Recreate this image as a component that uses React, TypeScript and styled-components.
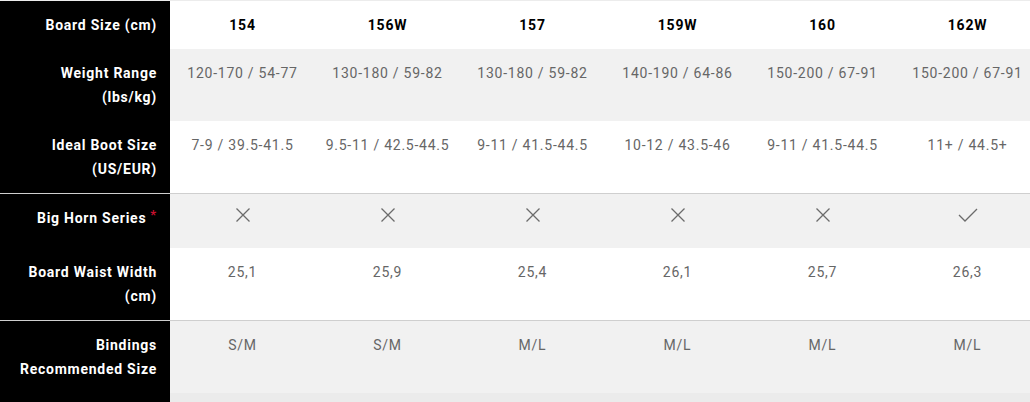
import styled, { createGlobalStyle } from 'styled-components';

const GlobalStyle = createGlobalStyle`
  html, body {
    margin: 0;
    padding: 0;
    background: #ebebeb;
    overflow: hidden;
  }
  body {
    font-family: 'Roboto', 'Liberation Sans', sans-serif;
  }
`;

const Table = styled.div`
  width: 1040px;
  border-top: 1px solid #ececec;
`;

const Row = styled.div<{ $shade?: boolean; $divider?: boolean; $short?: boolean }>`
  display: grid;
  grid-template-columns: 170px repeat(6, 145px);
  background: ${({ $shade }) => ($shade ? '#f1f1f1' : '#ffffff')};
  border-top: ${({ $divider }) => ($divider ? '1px solid #cfcfcf' : 'none')};
  min-height: ${({ $short }) => ($short ? '54px' : '72px')};
`;

const HeadRow = styled(Row)`
  min-height: 48px;
`;

const Label = styled.div`
  background: #000;
  color: #fff;
  font-weight: 700;
  font-size: 14px;
  line-height: 24px;
  letter-spacing: 0.75px;
  text-align: right;
  padding: 12px 13px 12px 4px;
  white-space: nowrap;
`;

const Cell = styled.div<{ $head?: boolean }>`
  color: ${({ $head }) => ($head ? '#000' : '#666')};
  font-weight: ${({ $head }) => ($head ? 700 : 400)};
  font-size: 14px;
  line-height: 24px;
  letter-spacing: 0.75px;
  text-align: center;
  padding: 12px 0;
  white-space: nowrap;
`;

const IconCell = styled.div`
  display: flex;
  justify-content: center;
  padding-top: 13px;
`;

const Star = styled.sup`
  color: #c8102e;
  font-size: 13px;
  margin-left: 4px;
  vertical-align: 4px;
  line-height: 0;
`;

const Filler = styled.div`
  display: grid;
  grid-template-columns: 170px 1fr;
  height: 10px;
`;

const FillerLabel = styled.div`
  background: #000;
`;

const Cross = () => (
  <svg width="16" height="16" viewBox="0 0 16 16" fill="none" stroke="#6b6b6b" strokeWidth="1.3">
    <path d="M1.5 1.5 L14.5 14.5 M14.5 1.5 L1.5 14.5" />
  </svg>
);

const Check = () => (
  <svg width="20" height="16" viewBox="0 0 20 16" fill="none" stroke="#6b6b6b" strokeWidth="1.3">
    <path d="M1 8 L7 14 L19 2" />
  </svg>
);

const sizes = ['154', '156W', '157', '159W', '160', '162W'];

type Spec = { label: React.ReactNode; values: string[]; shade?: boolean; divider?: boolean };

const specs: Spec[] = [
  {
    label: <>Weight Range<br />(lbs/kg)</>,
    values: ['120-170 / 54-77', '130-180 / 59-82', '130-180 / 59-82', '140-190 / 64-86', '150-200 / 67-91', '150-200 / 67-91'],
    shade: true,
  },
  {
    label: <>Ideal Boot Size<br />(US/EUR)</>,
    values: ['7-9 / 39.5-41.5', '9.5-11 / 42.5-44.5', '9-11 / 41.5-44.5', '10-12 / 43.5-46', '9-11 / 41.5-44.5', '11+ / 44.5+'],
  },
];

const bigHorn = [false, false, false, false, false, true];

const lower: Spec[] = [
  {
    label: <>Board Waist Width<br />(cm)</>,
    values: ['25,1', '25,9', '25,4', '26,1', '25,7', '26,3'],
  },
  {
    label: <>Bindings<br />Recommended Size</>,
    values: ['S/M', 'S/M', 'M/L', 'M/L', 'M/L', 'M/L'],
    shade: true,
    divider: true,
  },
];

const SpecRow = ({ label, values, shade, divider }: Spec) => (
  <Row $shade={shade} $divider={divider}>
    <Label>{label}</Label>
    {values.map((v, i) => (
      <Cell key={i}>{v}</Cell>
    ))}
  </Row>
);

export default function App() {
  return (
    <>
      <GlobalStyle />
      <Table>
        <HeadRow>
          <Label>Board Size (cm)</Label>
          {sizes.map((s) => (
            <Cell key={s} $head>
              {s}
            </Cell>
          ))}
        </HeadRow>
        {specs.map((s, i) => (
          <SpecRow key={i} {...s} />
        ))}
        <Row $shade $divider $short>
          <Label>
            Big Horn Series<Star>*</Star>
          </Label>
          {bigHorn.map((yes, i) => (
            <IconCell key={i}>{yes ? <Check /> : <Cross />}</IconCell>
          ))}
        </Row>
        {lower.map((s, i) => (
          <SpecRow key={i} {...s} />
        ))}
        <Filler>
          <FillerLabel />
          <div />
        </Filler>
      </Table>
    </>
  );
}
